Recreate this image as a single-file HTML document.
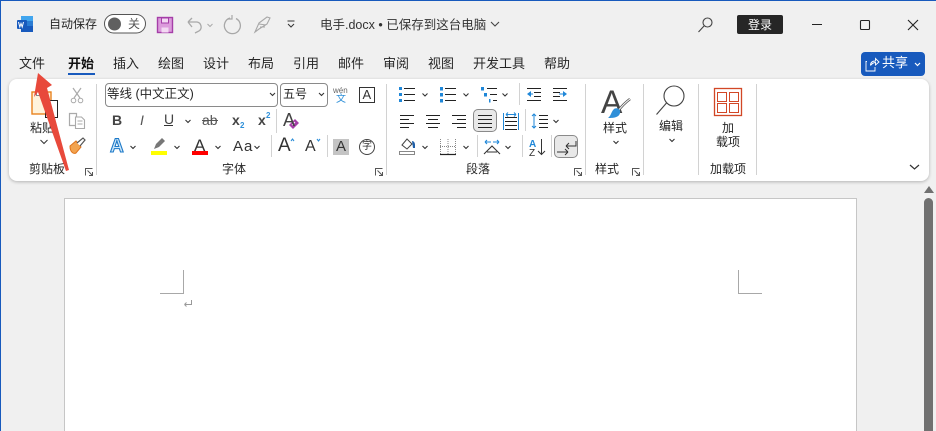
<!DOCTYPE html>
<html lang="zh"><head><meta charset="utf-8"><style>
html,body{margin:0;padding:0;width:936px;height:431px;overflow:hidden}
body{font-family:"Liberation Sans","Noto Sans CJK SC",sans-serif;color:#262626}
#w{position:relative;width:936px;height:431px;overflow:hidden;background:#f0f0f0}
.t{position:absolute;z-index:2;font-size:12px;line-height:16px;white-space:nowrap}
.tab{font-size:13px;top:56px}
.b{position:absolute}
#rib{left:9px;top:79px;width:920px;height:102px;background:#fff;border-radius:8px;box-shadow:0 1px 3px rgba(0,0,0,.25)}
.combo{top:83px;height:22px;border:1px solid #8a8a8a;border-radius:4px;background:#fff}
#page{left:64px;top:198px;width:791px;height:240px;background:#fff;border:1px solid #c6c6c6}
svg{position:absolute;left:0;top:0}
</style></head><body><div id="w">
<div class="b" id="page"></div>
<div class="b" style="left:924px;top:198px;width:9px;height:240px;background:#707070;border-radius:5px 5px 0 0"></div>
<div class="b" id="rib"></div>
<div class="b" style="left:0;top:0;width:936px;height:1px;background:#185abd"></div>
<div class="b" style="left:0;top:0;width:1px;height:431px;background:#185abd"></div>
<div class="b combo" style="left:105px;width:171px"></div>
<div class="b combo" style="left:280px;width:46px"></div>
<div class="b" style="left:473px;top:109px;width:22px;height:21px;background:#e8e8e8;border:1px solid #8a8a8a;border-radius:5px"></div>
<div class="b" style="left:554px;top:135px;width:22px;height:21px;background:#e8e8e8;border:1px solid #8a8a8a;border-radius:5px"></div>
<div class="b" style="left:333px;top:139px;width:16px;height:16px;background:#c4c4c4"></div>
<div class="b" style="left:737px;top:15px;width:46px;height:19px;background:#262626;border-radius:2px"></div>
<div class="b" style="left:861px;top:52px;width:64px;height:24px;background:#185abd;border-radius:4px"></div>
<div class="b" style="left:68px;top:73px;width:27px;height:2px;background:#185abd"></div>

<span class="t" style="left:49px;top:16px">自动保存</span>
<span class="t" style="left:128px;top:16px;color:#555">关</span>
<span class="t" style="left:320px;top:17px;font-size:12.5px;color:#333">电手.docx • 已保存到这台电脑</span>
<span class="t" style="left:748px;top:17px;color:#fff">登录</span>
<span class="t" style="left:882px;top:55px;color:#fff;font-size:13px">共享</span>

<span class="t tab" style="left:19px">文件</span>
<span class="t tab" style="left:68px;font-weight:bold;color:#111">开始</span>
<span class="t tab" style="left:113px">插入</span>
<span class="t tab" style="left:158px">绘图</span>
<span class="t tab" style="left:203px">设计</span>
<span class="t tab" style="left:248px">布局</span>
<span class="t tab" style="left:293px">引用</span>
<span class="t tab" style="left:338px">邮件</span>
<span class="t tab" style="left:383px">审阅</span>
<span class="t tab" style="left:428px">视图</span>
<span class="t tab" style="left:473px">开发工具</span>
<span class="t tab" style="left:544px">帮助</span>

<span class="t" style="left:30px;top:120px">粘贴</span>
<span class="t" style="left:29px;top:161px">剪贴板</span>
<span class="t" style="left:107px;top:86px;font-size:12.5px">等线 (中文正文)</span>
<span class="t" style="left:283px;top:86px;font-size:12px">五号</span>
<span class="t" style="left:222px;top:161px">字体</span>
<span class="t" style="left:466px;top:161px">段落</span>
<span class="t" style="left:603px;top:120px">样式</span>
<span class="t" style="left:595px;top:161px">样式</span>
<span class="t" style="left:659px;top:118px">编辑</span>
<span class="t" style="left:722px;top:120px">加</span>
<span class="t" style="left:716px;top:134px">载项</span>
<span class="t" style="left:710px;top:161px">加载项</span>

<span class="t" style="left:112px;top:112px;font-weight:bold;font-size:14px;color:#444">B</span>
<span class="t" style="left:140px;top:112px;font-style:italic;font-size:14px;color:#555">I</span>
<span class="t" style="left:164px;top:111px;font-size:14px;color:#444">U</span>
<span class="t" style="left:202px;top:112px;font-size:14px;color:#555">ab</span>
<span class="t" style="left:232px;top:112px;font-weight:bold;font-size:14px;color:#444">x</span>
<span class="t" style="left:240px;top:118px;font-weight:bold;font-size:8px;color:#2e8fd8">2</span>
<span class="t" style="left:258px;top:112px;font-weight:bold;font-size:14px;color:#444">x</span>
<span class="t" style="left:266px;top:108px;font-weight:bold;font-size:8px;color:#2e8fd8">2</span>
<span class="t" style="left:283px;top:110px;font-size:18px;line-height:20px;color:#444">A</span>
<span class="t" style="left:110px;top:137px;font-size:19px;line-height:20px;font-weight:bold;color:#cfe7f8;-webkit-text-stroke:1.1px #1b78c8">A</span>
<span class="t" style="left:194px;top:136px;font-size:17px;line-height:20px;color:#333">A</span>
<span class="t" style="left:233px;top:137px;font-size:15px;line-height:20px;letter-spacing:1px;color:#333">Aa</span>
<span class="t" style="left:278px;top:136px;font-size:19px;line-height:20px;color:#333">A</span>
<span class="t" style="left:305px;top:137px;font-size:16px;line-height:20px;color:#333">A</span>
<span class="t" style="left:336px;top:137px;font-size:15px;line-height:20px;color:#333">A</span>
<span class="t" style="left:362px;top:139px;font-size:10px;color:#333">字</span>
<span class="t" style="left:333px;top:86px;font-size:8px;line-height:9px;color:#666">wén</span>
<span class="t" style="left:336px;top:94px;font-size:10px;line-height:11px;color:#2e8fd8">文</span>
<span class="t" style="left:362.500px;top:87px;font-size:13px;color:#333">A</span>
<span class="t" style="left:601px;top:84px;font-size:32px;line-height:36px;color:#444">A</span>

<svg width="936" height="431" viewBox="0 0 936 431" fill="none">
<!-- word icon -->
<rect x="21" y="16" width="12" height="16" rx="1" fill="#2b7cd3"/><rect x="21" y="16" width="12" height="5" fill="#41a5ee"/><rect x="21" y="26" width="12" height="6" fill="#185abd"/>
<rect x="17" y="20" width="10" height="9" rx="1" fill="#185abd"/>
<path d="M18.500 22l1.300 5 1.200-3.600 1.200 3.600 1.300-5" stroke="#fff"/>
<!-- toggle -->
<rect x="104.500" y="14.500" width="41" height="18.500" rx="9.200" stroke="#555" fill="#fff"/>
<circle cx="114.500" cy="24" r="6.500" fill="#606060"/>
<!-- save -->
<rect x="157.500" y="17.500" width="15" height="15" fill="#dc9bdc" stroke="#a53ea8" stroke-width="1.400"/>
<rect x="161.500" y="18" width="7" height="5" fill="#f3d9f3" stroke="#a53ea8"/><rect x="161.500" y="27.500" width="7" height="5" fill="#f3d9f3"/>
<!-- undo etc -->
<path d="M188 22h9a5 5 0 0 1 2 9l-4 2M188 22l4-4M188 22l4 5" stroke="#a8a8a8" stroke-width="1.300"/>
<path d="M207.500 24l2.500 2.500 2.500-2.500" stroke="#aaa"/>
<path d="M230 18a8 8 0 1 0 6 .500" stroke="#a8a8a8" stroke-width="1.300"/><path d="M232 15v4h-4" stroke="#a8a8a8" stroke-width="1.200"/>
<path d="M255 32l4-9 8-6 3 1-3 6-8 5zM259 24l7 1M260 27h5" stroke="#a8a8a8" stroke-width="1.100"/>
<path d="M287.500 21h7M288 24l3 3 3-3" stroke="#333"/>
<path d="M491 22l4 4 4-4" stroke="#444" stroke-width="1.100"/>
<!-- search/window -->
<circle cx="707.500" cy="22.500" r="4.500" stroke="#444" stroke-width="1.100"/><path d="M704 26l-5.500 6" stroke="#444" stroke-width="1.100"/>
<path d="M812 24.500h10" stroke="#222"/><rect x="860.500" y="20.500" width="9" height="9" rx="1" stroke="#222" stroke-width="1.100"/>
<path d="M908 20l10 10M918 20l-10 10" stroke="#222" stroke-width="1.100"/>
<!-- share -->
<path d="M866.500 62v-.500h-.5v9.500h9v-4M870.500 65.500c0-3 2-4.500 5-4.500v-2.500l3.500 3.500-3.500 3v-2.500c-2 0-3.500 1-5 3" stroke="#fff" stroke-width=".9"/>
<path d="M915 63l2.500 2.500 2.500-2.500" stroke="#fff" stroke-width="1.200"/>
<!-- separators -->
<path d="M96.500 84v91M386.500 84v91M585.500 84v91M643.500 84v91M698.500 84v91M756.500 84v91M276.500 109v24M271.500 135v22M327.500 135v22M519.500 83v22M525.500 109v22M477.500 135v22M522.500 135v22M551.500 135v22" stroke="#d2d2d2"/>
<!-- paste -->
<rect x="32" y="92" width="19" height="22" fill="#fff3dc" stroke="#e8821e" stroke-width="1.400"/>
<rect x="36.500" y="89.500" width="6" height="6" fill="#fff" stroke="#888"/>
<rect x="45.500" y="100.500" width="12" height="17" fill="#fff" stroke="#222"/>
<path d="M40.500 140l3.500 3.500 3.500-3.500" stroke="#333"/>
<!-- scissors -->
<path d="M73 88l7 10M81 88l-7 10" stroke="#aaa" stroke-width="1.200"/><circle cx="73.500" cy="100.500" r="2.300" stroke="#aaa"/><circle cx="80.500" cy="100.500" r="2.300" stroke="#aaa"/>
<!-- copy -->
<path d="M75 125.500h-5.500v-12h7v3" stroke="#aaa" stroke-width="1.200"/><path d="M75.500 117h6l3 3v8.500h-9zM77.500 121h5M77.500 124h5" stroke="#aaa" stroke-width="1.100"/>
<!-- painter -->
<path d="M70 146l6-5 5 6-5 6c-2 1-6 0-6-7z" fill="#f2a34f" stroke="#e0741c"/><path d="M77 143l6-5 2 2-5 6" fill="#fff" stroke="#555" stroke-width="1.200"/>
<!-- launchers -->
<g stroke="#555"><path d="M85.500 175.500v-7h7M87.500 170.500l5 5M92.500 172v3.500h-3.500"/>
<path d="M375.500 175.500v-7h7M377.500 170.500l5 5M382.500 172v3.500h-3.500"/>
<path d="M574.500 175.500v-7h7M576.500 170.500l5 5M581.500 172v3.500h-3.500"/>
<path d="M632.500 175.500v-7h7M634.500 170.500l5 5M639.500 172v3.500h-3.500"/></g>
<!-- chevrons -->
<g stroke="#333" stroke-width="1.100">
<path d="M270 93l2.500 2.500 2.500-2.500M319 93l2.500 2.500 2.500-2.500M185.500 120l2.500 2.500 2.500-2.500M130.500 146l2.500 2.500 2.500-2.500M174.500 146l2.500 2.500 2.500-2.500M215.500 146l2.500 2.500 2.500-2.500M254.500 146l2.500 2.500 2.500-2.500M422.500 93.500l2.500 2.500 2.500-2.500M463.500 93.500l2.500 2.500 2.500-2.500M502.500 93.500l2.500 2.500 2.500-2.500M553.500 120l2.500 2.500 2.500-2.500M422.500 146l2.500 2.500 2.500-2.500M463.500 146l2.500 2.500 2.500-2.500M505.500 146l2.500 2.500 2.500-2.500M613.500 141l2.500 2.500 2.500-2.500M669.500 139l2.500 2.500 2.500-2.500"/>
<path d="M910 165l4.500 4 4.500-4" stroke-width="1.200"/></g>
<!-- U underline, strike -->
<path d="M164 125.500h9" stroke="#333"/><path d="M202 120.500h16" stroke="#555"/>
<!-- eraser -->
<path d="M289 125l6-6 4 4-6 6z" fill="#a53ea8"/>
<path d="M292 125l3-3" stroke="#fff"/>
<!-- color bars -->
<rect x="151" y="151" width="16" height="4" fill="#ffff00"/><rect x="192" y="151" width="16" height="4" fill="#f00"/>
<path d="M154 149l2-5 6-6 3 3-6 6z" fill="#777"/>
<path d="M291 141l1.500-2 1.500 2M317 139l1.500 2 1.500-2" stroke="#2e8fd8" stroke-width="1.100"/>
<circle cx="367" cy="147" r="7.500" stroke="#444"/>
<rect x="359.500" y="87.500" width="15" height="15" stroke="#333"/>
<!-- bullets -->
<g fill="#1f87d8"><rect x="399" y="87" width="3" height="3"/><rect x="399" y="93" width="3" height="3"/><rect x="399" y="99" width="3" height="3"/>
<rect x="440" y="87" width="3" height="3.500"/><rect x="440" y="93" width="3" height="3.500"/><rect x="440" y="99" width="3" height="3.500"/>
<rect x="481" y="87" width="3" height="3.500"/><rect x="484" y="93" width="3" height="3.500"/><rect x="489" y="99" width="1.500" height="3.500"/>
<path d="M527 94l4-3v6zM567 94l-4-3v6z"/></g>
<g stroke="#222"><path d="M404 88.500h11M404 94.500h11M404 100.500h11M445 88.500h11M445 94.500h11M445 100.500h11M487 88.500h10M490 94.500h7M493 100.500h4"/>
<path d="M527 88.500h14M534 92.500h7M534 96.500h7M527 100.500h14M553 88.500h14M553 92.500h7M553 96.500h7M553 100.500h14"/>
<path d="M400 115.500h14M400 119.500h9M400 123.500h14M400 127.500h9M426 115.500h14M428 119.500h10M426 123.500h14M428 127.500h10M452 115.500h14M457 119.500h9M452 123.500h14M457 127.500h9M478 115.500h14M478 119.500h14M478 123.500h14M478 127.500h14"/>
<path d="M505 117.500h12M505 121.500h12M505 125.500h12M505 129.500h12M539 115.500h9M539 119.500h9M539 123.500h9M539 127.500h9"/></g>
<path d="M503.500 113v17M518.500 113v17" stroke="#1f87d8"/><path d="M506 114.500h10M506 114.500l2-2M506 114.500l2 2M516 114.500l-2-2M516 114.500l-2 2M534 114v14M532 116l2-2 2 2M532 126l2 2 2-2" stroke="#1f87d8"/>
<path d="M529 94h4M559 94h4" stroke="#1f87d8"/>
<!-- shading -->
<rect x="399.500" y="151.500" width="15" height="3" stroke="#888"/>
<path d="M402 145l5-6 5 5-5 5z" stroke="#444" fill="#fff"/><path d="M412 141c2 0 3 2 3 4v3h-2z" fill="#1f5fa8"/>
<!-- borders -->
<path d="M440.500 139v15M455.500 139v15M448 139v15M440 146.500h16" stroke="#888" stroke-dasharray="1 1"/><path d="M440 154.500h16" stroke="#222" stroke-width="1.200"/>
<!-- direction -->
<path d="M485 142h6M485 142l2-2M485 142l2 2M499 142h-6M499 142l-2-2M499 142l-2 2" stroke="#1f87d8" stroke-width="1.100"/>
<path d="M484 154l8-8 8 8M487 152h10" stroke="#333" stroke-width="1.100"/>
<!-- sort -->
<path d="M541.500 139v15M538 151l3.500 3.500 3.500-3.500" stroke="#333"/>
<text x="529" y="147" font-family="Liberation Sans" font-size="10" font-weight="bold" fill="#1f87d8">A</text>
<text x="529" y="156" font-family="Liberation Sans" font-size="10" fill="#333">Z</text>
<!-- pilcrow -->
<path d="M576 141v5h-10M566 146l3-3M566 146l3 3M557 152h11M568 152l-3-3M568 152l-3 3" stroke="#333"/>
<!-- find -->
<circle cx="674" cy="96" r="10" stroke="#444" stroke-width="1.100"/><path d="M666.500 103l-10 11.500" stroke="#444" stroke-width="1.100"/>
<!-- addins -->
<rect x="714.500" y="88.500" width="27" height="27" stroke="#d24726" stroke-width="1.300"/><rect x="717.500" y="92.500" width="9" height="9" stroke="#d24726"/><rect x="729.500" y="92.500" width="9" height="9" stroke="#d24726"/><rect x="717.500" y="103.500" width="9" height="9" stroke="#d24726"/><rect x="729.500" y="103.500" width="9" height="9" stroke="#d24726"/>
<!-- scroll arrow -->
<path d="M924 193l5-7 5 7z" fill="#707070"/>
<!-- crop marks -->
<path d="M183.500 270v23.500h-23.500M738.500 270v23.500h23.500" stroke="#a8a8a8"/>
<path d="M191.500 300v4.500h-7M184.500 304.500l2-2M184.500 304.500l2 2" stroke="#999"/>
</svg>
<svg width="936" height="431" viewBox="0 0 936 431" fill="none" style="z-index:3">
<!-- brush over styles A -->
<path d="M630 99c-4 3-9 8-12 12" stroke="#555" stroke-width="2.600"/><path d="M630 99c-4 3-9 8-12 12" stroke="#fff" stroke-width="1"/>
<path d="M608 118c4 0 11 0 12-5 1-4-3-6-6-4-3 3-3 7-6 9z" fill="#2e8fd8"/>
<!-- red arrow -->
<path d="M38 73L52 85 47 88 69 170 66 171 38 92 34 97z" fill="#e8493b"/>
</svg>
</div></body></html>
